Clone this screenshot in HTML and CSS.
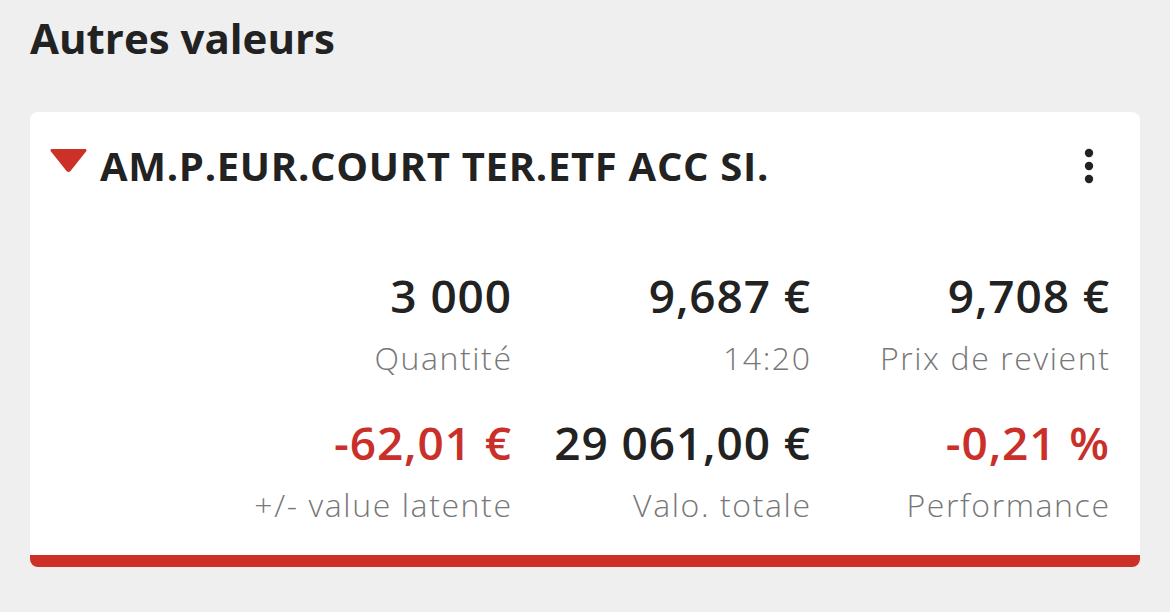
FILE: index.html
```html
<!DOCTYPE html>
<html lang="fr">
<head>
  <meta charset="UTF-8">
  <meta name="viewport" content="width=device-width, initial-scale=1.0">
  <title>Autres valeurs</title>
  <link rel="stylesheet" href="styles.css">
</head>
<body>
  <div class="page">
    <h1 class="section-title">Autres valeurs</h1>
    <div class="position-card">
      <div class="card-header">
        <svg class="trend-icon" width="39" height="25" viewBox="0 0 39 25">
          <path d="M3 1 H36 Q38.5 1 37 3.5 L21.5 23 Q19.5 25 17.5 23 L2 3.5 Q0.5 1 3 1 Z" fill="#cc3027"/>
        </svg>
        <h2 class="stock-name">AM.P.EUR.COURT TER.ETF ACC SI.</h2>
        <svg class="more-icon" width="24" height="40" viewBox="0 0 24 40">
          <circle cx="12" cy="7" r="4.2" fill="#222"/>
          <circle cx="12" cy="20" r="4.2" fill="#222"/>
          <circle cx="12" cy="33" r="4.2" fill="#222"/>
        </svg>
      </div>
      <div class="figures">
        <div class="figure">
          <div class="figure-value">3 000</div>
          <div class="figure-label">Quantité</div>
        </div>
        <div class="figure">
          <div class="figure-value">9,687 €</div>
          <div class="figure-label">14:20</div>
        </div>
        <div class="figure">
          <div class="figure-value">9,708 €</div>
          <div class="figure-label">Prix de revient</div>
        </div>
        <div class="figure">
          <div class="figure-value negative">-62,01 €</div>
          <div class="figure-label">+/- value latente</div>
        </div>
        <div class="figure">
          <div class="figure-value">29 061,00 €</div>
          <div class="figure-label">Valo. totale</div>
        </div>
        <div class="figure">
          <div class="figure-value negative">-0,21 %</div>
          <div class="figure-label">Performance</div>
        </div>
      </div>
    </div>
  </div>
</body>
</html>
```

FILE: styles.css
```css
body {
  margin: 0;
  padding: 0;
  background-color: #efefef;
  font-family: 'Open Sans', 'Noto Sans', sans-serif;
  color: #222;
}

.page {
  padding: 10px 30px 0 30px;
}

.section-title {
  margin: 0 0 46px 0;
  font-size: 42px;
  line-height: 56px;
  font-weight: 700;
  color: #222;
}

.position-card {
  background-color: #fff;
  border-radius: 8px;
  border-bottom: 12px solid #cc3027;
  padding: 28px 31px 28px 19px;
}

.card-header {
  display: flex;
  align-items: center;
  height: 52px;
}

.trend-icon {
  flex: 0 0 auto;
  margin-top: -11px;
  margin-right: 12px;
}

.stock-name {
  flex: 1;
  margin: 0;
  font-size: 40px;
  line-height: 52px;
  font-weight: 700;
  letter-spacing: 0.7px;
  color: #222;
}

.more-icon {
  flex: 0 0 auto;
  margin-right: 8px;
}

.figures {
  display: grid;
  grid-template-columns: repeat(3, 299px);
  justify-content: end;
  row-gap: 34px;
  margin-top: 75px;
}

.figure {
  text-align: right;
}

.figure-value {
  margin-right: -1px;
  font-size: 46px;
  line-height: 56px;
  font-weight: 600;
  letter-spacing: 0.9px;
  color: #222;
}

.figure-value.negative {
  color: #c9302a;
}

.figure-label {
  margin-top: 13px;
  margin-right: -1.6px;
  font-size: 32px;
  line-height: 44px;
  font-weight: 300;
  letter-spacing: 1.6px;
  color: #777;
}
```
